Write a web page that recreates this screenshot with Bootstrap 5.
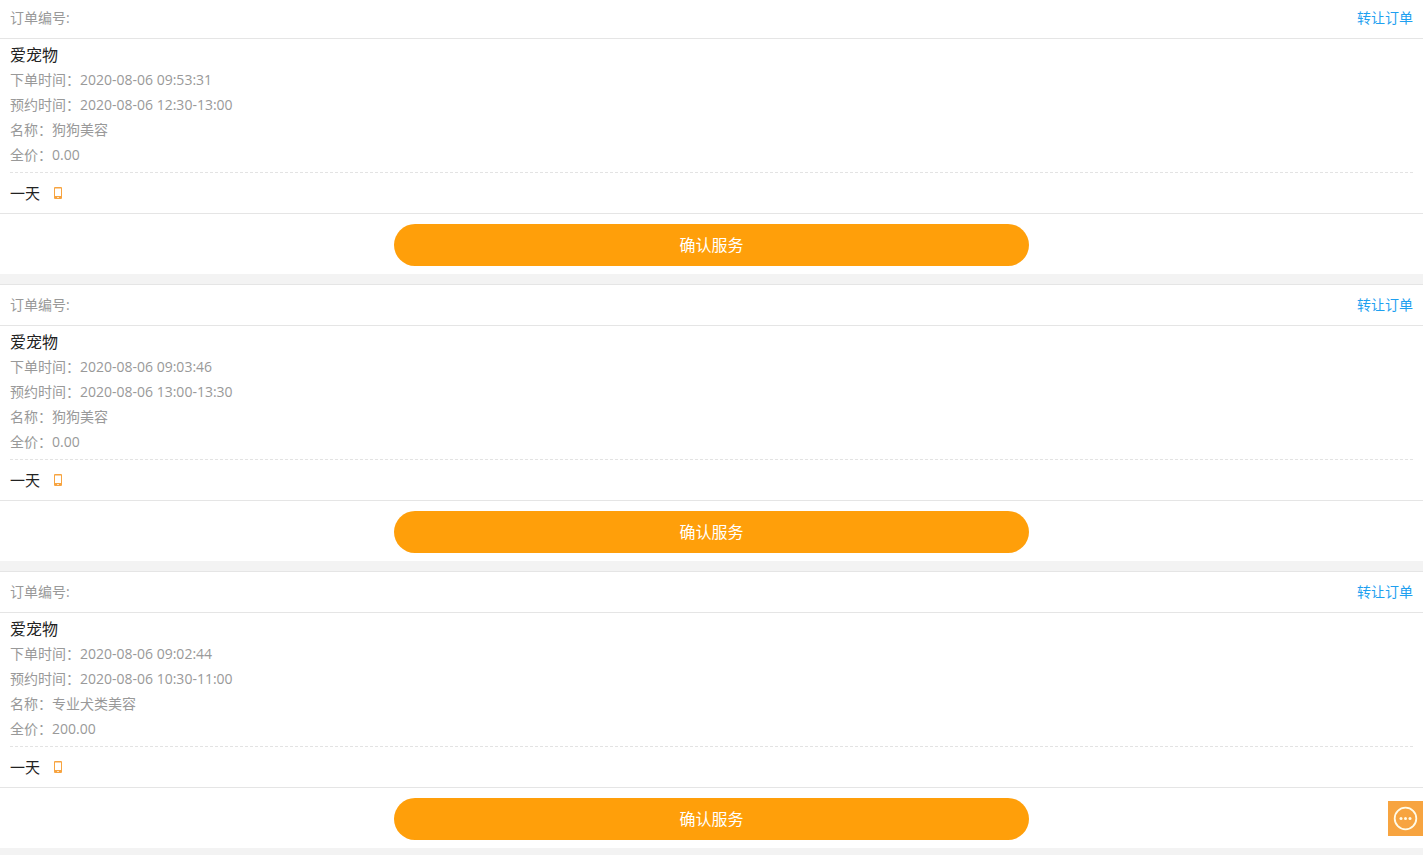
<!DOCTYPE html>
<html lang="zh-CN">
<head>
<meta charset="utf-8">
<meta name="viewport" content="width=device-width, initial-scale=1">
<title>订单列表</title>
<link rel="stylesheet" href="https://cdn.jsdelivr.net/npm/bootstrap@5.3.0/dist/css/bootstrap.min.css">
<style>
body { font: 14px/25px "Open Sans", "Noto Sans CJK SC", sans-serif; color: #999; background: #f3f3f3; }
.order-list { margin-top: -3px; }
.order { background: #fff; border-top: 1px solid #e5e5e5; }
.order + .order { margin-top: 10px; }
.order-head { height: 41px; padding: 0 10px 2px; border-bottom: 1px solid #e5e5e5; }
.order-head a { color: #1ea0f0; }
.order-body { padding: 4px 10px 0; }
.shop { font-size: 16px; line-height: 24px; color: #222; font-weight: 400; }
.person { height: 41px; border-top: 1px dashed #e3e3e3; margin-top: 5px; color: #222; font-size: 15px; }
.person a { display: flex; margin-left: 14px; }
.order-foot { border-top: 1px solid #e5e5e5; padding: 10px 0 8px; }
.btn-confirm, .btn-confirm:hover { width: 44.6%; height: 42px; border-radius: 21px; background: #ff9f0a; color: #fff; font-size: 16px; border: 0; padding: 0; }
.chat-btn { right: 0; bottom: 19px; width: 35px; height: 35px; background: #f7a440; }
</style>
</head>
<body>
<svg class="d-none" aria-hidden="true">
  <symbol id="phone" viewBox="0 0 8 12"><path fill="#f7a440" fill-rule="evenodd" d="M1 0h6q1 0 1 1v10q0 1-1 1H1q-1 0-1-1V1q0-1 1-1zM1 1.5v7.500h6V1.500zM3.300 10v1h1.400v-1z"/></symbol>
</svg>
<main class="order-list">
  <section class="order">
    <div class="order-head d-flex justify-content-between align-items-center"><span>订单编号:</span><a href="#" class="text-decoration-none">转让订单</a></div>
    <div class="order-body">
      <h2 class="shop m-0">爱宠物</h2>
      <div>下单时间：2020-08-06 09:53:31</div>
      <div>预约时间：2020-08-06 12:30-13:00</div>
      <div>名称：狗狗美容</div>
      <div>全价：0.00</div>
      <div class="person d-flex align-items-center"><span>一天</span><a href="#" aria-label="电话"><svg width="8" height="12"><use href="#phone"/></svg></a></div>
    </div>
    <div class="order-foot d-flex justify-content-center"><button type="button" class="btn btn-confirm">确认服务</button></div>
  </section>
  <section class="order">
    <div class="order-head d-flex justify-content-between align-items-center"><span>订单编号:</span><a href="#" class="text-decoration-none">转让订单</a></div>
    <div class="order-body">
      <h2 class="shop m-0">爱宠物</h2>
      <div>下单时间：2020-08-06 09:03:46</div>
      <div>预约时间：2020-08-06 13:00-13:30</div>
      <div>名称：狗狗美容</div>
      <div>全价：0.00</div>
      <div class="person d-flex align-items-center"><span>一天</span><a href="#" aria-label="电话"><svg width="8" height="12"><use href="#phone"/></svg></a></div>
    </div>
    <div class="order-foot d-flex justify-content-center"><button type="button" class="btn btn-confirm">确认服务</button></div>
  </section>
  <section class="order">
    <div class="order-head d-flex justify-content-between align-items-center"><span>订单编号:</span><a href="#" class="text-decoration-none">转让订单</a></div>
    <div class="order-body">
      <h2 class="shop m-0">爱宠物</h2>
      <div>下单时间：2020-08-06 09:02:44</div>
      <div>预约时间：2020-08-06 10:30-11:00</div>
      <div>名称：专业犬类美容</div>
      <div>全价：200.00</div>
      <div class="person d-flex align-items-center"><span>一天</span><a href="#" aria-label="电话"><svg width="8" height="12"><use href="#phone"/></svg></a></div>
    </div>
    <div class="order-foot d-flex justify-content-center"><button type="button" class="btn btn-confirm">确认服务</button></div>
  </section>
</main>
<button type="button" class="chat-btn position-fixed border-0 p-0 d-flex align-items-center justify-content-center" aria-label="消息">
  <svg width="25" height="25" viewBox="0 0 25 25" fill="#fffbe8"><circle cx="12.500" cy="12.500" r="10.800" fill="none" stroke="#fffbe8" stroke-width="1.800"/><circle cx="8" cy="12.500" r="1.500"/><circle cx="12.500" cy="12.500" r="1.500"/><circle cx="17" cy="12.500" r="1.500"/></svg>
</button>
<script src="https://cdn.jsdelivr.net/npm/bootstrap@5.3.0/dist/js/bootstrap.bundle.min.js"></script>
</body>
</html>
